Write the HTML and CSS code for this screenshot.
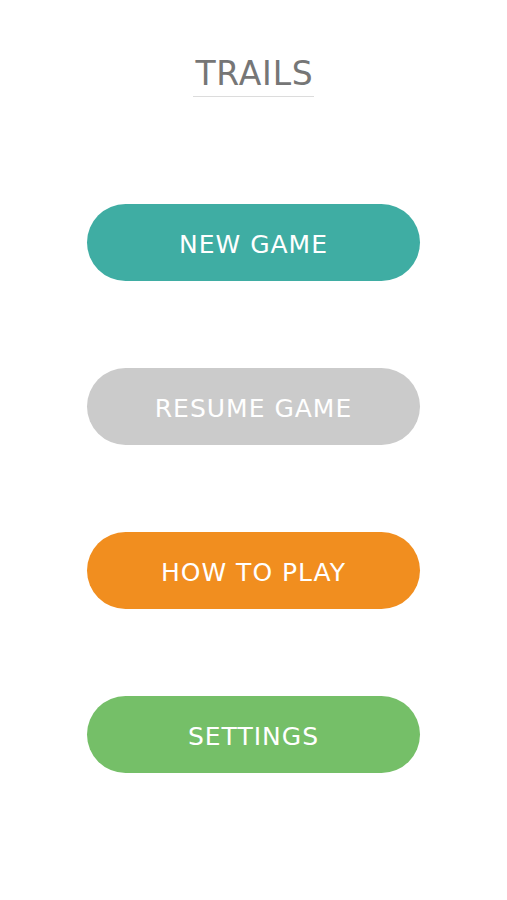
FILE: index.html
```html
<!DOCTYPE html>
<html>
   <head>
      <meta charset="utf-8">
      <title>Trails</title>
      <link rel="stylesheet" href="styles.css">
   </head>
   <body>
      <div class="header">
         <span class="title">TRAILS</span>
      </div>
      <div class="menu">
         <div class="btn btn-new">NEW GAME</div>
         <div class="btn btn-resume">RESUME GAME</div>
         <div class="btn btn-howto">HOW TO PLAY</div>
         <div class="btn btn-settings">SETTINGS</div>
      </div>
   </body>
</html>
```

FILE: styles.css
```css
body    { margin: 0; background: #ffffff;
          font-family: "DejaVu Sans", Verdana, sans-serif; }
.header { padding-top: 58px; text-align: center; }
.title  { display: inline-block;
          font-size: 33px; line-height: 32px;
          letter-spacing: 0.8px;
          color: #767676;
          padding: 0 0 6px 2px;
          border-bottom: 1px solid #dcdcdc; }
.menu   { display: flex; flex-direction: column; align-items: center;
          gap: 87px; margin-top: 107px; }
.btn    { box-sizing: border-box;
          width: 333px; height: 77px;
          padding-top: 5px;
          border-radius: 39px;
          text-align: center;
          font-size: 25px; line-height: 72px;
          letter-spacing: 1px;
          color: #ffffff; }
.btn-new      { background: #3fada3; }
.btn-resume   { background: #cbcbcb; }
.btn-howto    { background: #f18e1f; }
.btn-settings { background: #75bf68; }
```
